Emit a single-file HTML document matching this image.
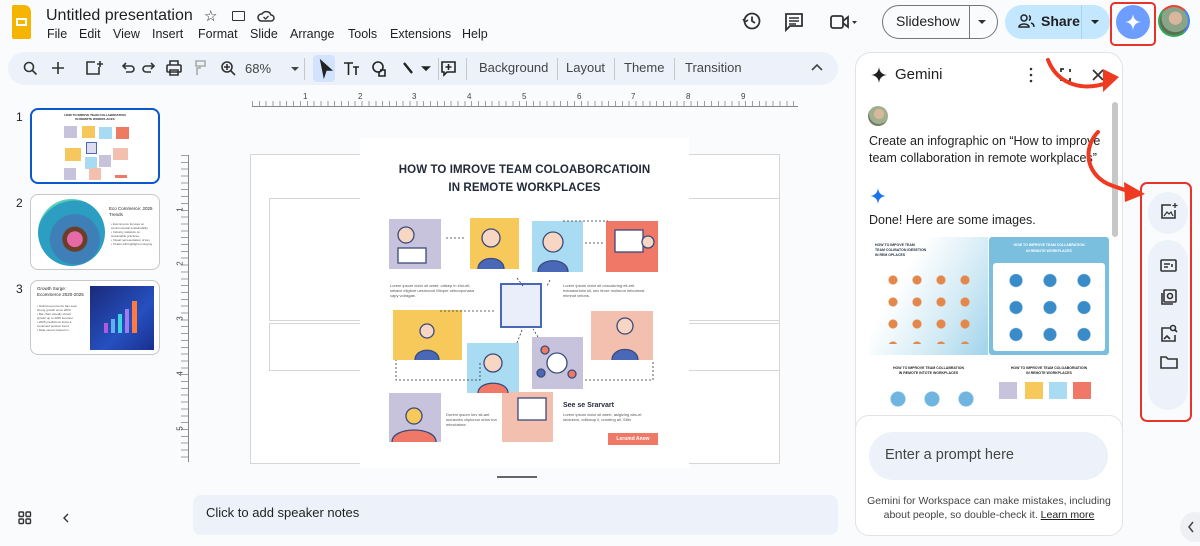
<!DOCTYPE html>
<html><head><meta charset="utf-8">
<style>
*{margin:0;padding:0;box-sizing:border-box}
body{width:1200px;height:546px;overflow:hidden;background:#f9fbfd;font-family:"Liberation Sans",Arial,sans-serif;color:#1f1f1f;position:relative}
.a{position:absolute}
.menu span{position:absolute;top:0}
.tb{font-size:13px;color:#444}
.tile{position:absolute}
.sm{font-size:4px;line-height:5px;color:#555}
.rn{position:absolute;top:92px;font-size:8px;color:#444}
</style></head><body>

<!-- logo -->
<div class="a" style="left:12px;top:5px;width:19px;height:34px;background:#f5b400;border-radius:2px 7px 2px 2px"></div>
<div class="a" style="left:16px;top:18px;width:11px;height:8px;border:2px solid #fff"></div>
<div class="a" style="left:46px;top:7px;font-size:16px;color:#1f1f1f">Untitled presentation</div>
<div class="a" style="left:204px;top:7px;font-size:15px">☆</div>
<div class="a" style="left:232px;top:11px;width:13px;height:10px;border:1.6px solid #333;border-radius:1px"></div>
<svg class="a" style="left:257px;top:9px" width="18" height="14"><path d="M4 12h10a3 3 0 0 0 0-6 5 5 0 0 0-9-1 3.5 3.5 0 0 0-1 7z" fill="none" stroke="#333" stroke-width="1.5"/><path d="M6.5 8l2 2 3-3" fill="none" stroke="#333" stroke-width="1.3"/></svg>
<div class="a menu" style="left:0;top:27px;font-size:12.5px;color:#1f1f1f;width:500px;height:16px"><span style="left:47px">File</span><span style="left:79px">Edit</span><span style="left:113px">View</span><span style="left:152px">Insert</span><span style="left:198px">Format</span><span style="left:250px">Slide</span><span style="left:290px">Arrange</span><span style="left:348px">Tools</span><span style="left:390px">Extensions</span><span style="left:462px">Help</span></div>

<!-- top right -->
<svg class="a" style="left:742px;top:11px" width="20" height="20"><circle cx="10" cy="10" r="7.5" fill="none" stroke="#333" stroke-width="1.8"/><path d="M10 5.5V10l3 2" fill="none" stroke="#333" stroke-width="1.8"/><path d="M1 8l2 3 3-2" fill="none" stroke="#333" stroke-width="1.6"/></svg>
<svg class="a" style="left:784px;top:12px" width="20" height="20"><path d="M2 2h16v12H6l-4 4z" fill="none" stroke="#333" stroke-width="1.8"/><path d="M5 6h10M5 9h10M5 12h7" stroke="#333" stroke-width="1.5"/></svg>
<svg class="a" style="left:829px;top:13px" width="30" height="18"><rect x="2" y="3" width="12" height="12" rx="2" fill="none" stroke="#333" stroke-width="1.8"/><path d="M14 8l5-4v10l-5-4" fill="none" stroke="#333" stroke-width="1.8"/><path d="M23 8h5l-2.5 3z" fill="#333"/></svg>
<div class="a" style="left:882px;top:5px;width:116px;height:34px;border:1px solid #747775;border-radius:17px"></div>
<div class="a" style="left:969px;top:5px;width:1px;height:34px;background:#747775"></div>
<div class="a" style="left:896px;top:13px;font-size:14px;color:#1f1f1f">Slideshow</div>
<svg class="a" style="left:977px;top:18px" width="10" height="8"><path d="M1 2h8l-4 4z" fill="#333"/></svg>
<div class="a" style="left:1005px;top:5px;width:105px;height:34px;background:#c2e7ff;border-radius:17px"></div>
<div class="a" style="left:1081px;top:5px;width:1px;height:34px;background:#a9d3ee"></div>
<svg class="a" style="left:1018px;top:14px" width="18" height="14"><circle cx="6" cy="4" r="3" fill="none" stroke="#222" stroke-width="1.5"/><path d="M1 13c0-4 10-4 10 0z" fill="none" stroke="#222" stroke-width="1.5"/><path d="M11 1.5a3 3 0 0 1 0 5M13 9c2 .5 3 2 3 4" fill="none" stroke="#222" stroke-width="1.5"/></svg>
<div class="a" style="left:1041px;top:13px;font-size:14px;font-weight:bold;color:#1f1f1f">Share</div>
<svg class="a" style="left:1090px;top:18px" width="10" height="8"><path d="M1 2h8l-4 4z" fill="#222"/></svg>
<div class="a" style="left:1116px;top:5px;width:34px;height:34px;border-radius:50%;background:#6d9eff"></div>
<svg class="a" style="left:1124px;top:13px" width="18" height="18"><path d="M9 1C9.6 6 12 8.4 17 9 12 9.6 9.6 12 9 17 8.4 12 6 9.6 1 9 6 8.4 8.4 6 9 1z" fill="#fff"/></svg>
<div class="a" style="left:1110px;top:2px;width:46px;height:44px;border:2.5px solid #e8332a;border-radius:5px"></div>
<div class="a" style="left:1158px;top:5px;width:32px;height:32px;border-radius:50%;border:2px solid #34a853;border-top-color:#ea4335;border-right-color:#4285f4;background:radial-gradient(circle at 55% 40%,#d9b79c 0 28%,#8aa48a 30% 60%,#5c6d53 62%)"></div>

<!-- toolbar -->
<div class="a" style="left:8px;top:52px;width:830px;height:33px;background:#edf2fa;border-radius:17px"></div>
<svg class="a" style="left:20px;top:58px" width="440" height="22" fill="none" stroke="#333" stroke-width="1.6">
<circle cx="9" cy="9" r="4.5"/><path d="M12.5 12.5l4 4"/>
<path d="M38 4v12M32 10h12"/>
<path d="M75 4h-8v12h12V9"/><path d="M80 3v6M77 6h6"/>
<path d="M104 8h7a3 3 0 0 1 0 6h-5"/><path d="M106 5l-3 3 3 3"/>
<path d="M133 8h-7a3 3 0 0 0 0 6h5"/><path d="M131 5l3 3-3 3"/>
<rect x="147" y="7" width="14" height="7" rx="1"/><path d="M150 7V3h8v4M150 12h8v5h-8z"/>
<path d="M176 3h9v5h-9zM180 8v2l-3 0v7" stroke="#aaa"/>
<circle cx="207" cy="9" r="5"/><path d="M211 13l4 4M207 6v6M204 9h6"/>
</svg>
<div class="a tb" style="left:245px;top:61px">68%</div>
<svg class="a" style="left:290px;top:66px" width="10" height="6"><path d="M1 1h8l-4 4z" fill="#444"/></svg>
<div class="a" style="left:304px;top:58px;width:1px;height:22px;background:#c7c7c7"></div>
<div class="a" style="left:313px;top:55px;width:22px;height:27px;background:#d3e3fd;border-radius:4px"></div>
<svg class="a" style="left:316px;top:58px" width="200" height="22" fill="none" stroke="#222" stroke-width="1.6">
<path d="M5 3l10 9-5 0-2 6z" fill="#222"/>
<path d="M28 5h9M32.5 5v12M37 9h6M40 9v8"/>
<circle cx="62" cy="9" r="5"/><path d="M64 12h5v6h-6v-4"/>
<path d="M88 5l8 10" stroke-width="2.4"/><path d="M107 9h6l-3 3z" fill="#222"/>
<path d="M126 4h13v10h-8l-3 3v-3h-2z"/><path d="M132.5 6v6M129.5 9h6"/>
</svg>
<div class="a" style="left:438px;top:58px;width:1px;height:22px;background:#c7c7c7"></div>
<div class="a" style="left:466px;top:58px;width:1px;height:22px;background:#c7c7c7"></div>
<div class="a tb" style="left:479px;top:60px">Background</div>
<div class="a" style="left:557px;top:58px;width:1px;height:22px;background:#c7c7c7"></div>
<div class="a tb" style="left:566px;top:60px">Layout</div>
<div class="a" style="left:614px;top:58px;width:1px;height:22px;background:#c7c7c7"></div>
<div class="a tb" style="left:624px;top:60px">Theme</div>
<div class="a" style="left:674px;top:58px;width:1px;height:22px;background:#c7c7c7"></div>
<div class="a tb" style="left:685px;top:60px">Transition</div>
<svg class="a" style="left:811px;top:64px" width="12" height="8"><path d="M1 6l5-5 5 5" fill="none" stroke="#444" stroke-width="1.6"/></svg>

<!-- thumbnails -->
<div class="a" style="left:16px;top:110px;font-size:12px">1</div>
<div class="a" style="left:16px;top:196px;font-size:12px">2</div>
<div class="a" style="left:16px;top:282px;font-size:12px">3</div>
<div class="a" style="left:30px;top:108px;width:130px;height:76px;border:2.5px solid #0b57d0;border-radius:8px;background:#fff;overflow:hidden">
 <div style="font-size:3px;font-weight:bold;text-align:center;margin-top:3px">HOW TO IMROVE TEAM COLLABORATION<br>IN REMOTE WORKPLACES</div>
 <div class="a" style="left:32px;top:16px;width:13px;height:12px;background:#c8c3dd"></div><div class="a" style="left:50px;top:16px;width:13px;height:12px;background:#f6c75c"></div><div class="a" style="left:67px;top:17px;width:13px;height:12px;background:#a7dbf2"></div><div class="a" style="left:84px;top:17px;width:13px;height:12px;background:#ef7a64"></div>
 <div class="a" style="left:33px;top:38px;width:16px;height:13px;background:#f6c75c"></div><div class="a" style="left:54px;top:32px;width:11px;height:12px;background:#dde;border:1px solid #4a68b8"></div><div class="a" style="left:81px;top:38px;width:15px;height:12px;background:#f3bfae"></div>
 <div class="a" style="left:53px;top:47px;width:12px;height:12px;background:#a7dbf2"></div><div class="a" style="left:67px;top:45px;width:12px;height:12px;background:#c8c3dd"></div>
 <div class="a" style="left:32px;top:58px;width:12px;height:12px;background:#c8c3dd"></div><div class="a" style="left:57px;top:58px;width:12px;height:12px;background:#f3bfae"></div><div class="a" style="left:83px;top:65px;width:12px;height:3px;background:#ef7a64"></div>
</div>
<div class="a" style="left:30px;top:194px;width:130px;height:76px;border:1px solid #c7c7c7;border-radius:8px;background:#fff;overflow:hidden">
 <div class="a" style="left:7px;top:4px;width:67px;height:67px;border-radius:50%;background:radial-gradient(circle at 55% 60%,#e66aa8 0 14%,#6b3e28 15% 22%,#3e7fb8 24% 45%,#2c9ec2 47% 70%,#5ad1b5 72%)"></div>
 <div class="a" style="left:78px;top:11px;font-size:4.5px;line-height:6px">Eco Commerce: 2025<br>Trends</div>
 <div class="a" style="left:80px;top:27px;font-size:3px;line-height:4px;color:#555">• Ecommerce focuses on<br>environmental sustainability<br>• Industry statistics on<br>sustainable practices<br>• Visual representation of key<br>• Charts will highlight emerging</div>
</div>
<div class="a" style="left:30px;top:280px;width:130px;height:75px;border:1px solid #c7c7c7;border-radius:8px;background:#fff;overflow:hidden">
 <div class="a" style="left:6px;top:5px;font-size:4.5px;line-height:6px">Growth Surge:<br>Ecommerce 2020-2025</div>
 <div class="a" style="left:6px;top:23px;font-size:3px;line-height:4px;color:#555">• Global ecommerce has seen<br>strong growth since 2020<br>• Bar chart visually shows<br>growth up to 2025 forecast<br>• 2025 predictions show a<br>continued positive trend<br>• Data used is based on</div>
 <div class="a" style="left:59px;top:5px;width:64px;height:64px;background:linear-gradient(135deg,#1b2a7a,#2550c0 60%,#1a2f8f)"></div>
 <div class="a" style="left:73px;top:42px;width:4px;height:10px;background:#b05adf"></div><div class="a" style="left:80px;top:38px;width:4px;height:14px;background:#5fb0f0"></div><div class="a" style="left:87px;top:33px;width:4px;height:19px;background:#41d4e0"></div><div class="a" style="left:94px;top:28px;width:4px;height:24px;background:#9e7cf0"></div><div class="a" style="left:101px;top:20px;width:5px;height:32px;background:#ff7a3c"></div>
</div>

<!-- rulers -->
<div class="a" style="left:252px;top:106px;width:546px;height:1px;background:#888"></div>
<div class="a" style="left:252px;top:101px;width:546px;height:5px;background:repeating-linear-gradient(90deg,#888 0 1px,transparent 1px 6.85px);opacity:.8"></div>
<div class="rn" style="left:303px">1</div><div class="rn" style="left:358px">2</div><div class="rn" style="left:412px">3</div><div class="rn" style="left:467px">4</div><div class="rn" style="left:522px">5</div><div class="rn" style="left:577px">6</div><div class="rn" style="left:631px">7</div><div class="rn" style="left:686px">8</div><div class="rn" style="left:741px">9</div>
<div class="a" style="left:181px;top:155px;width:7px;height:307px;background:repeating-linear-gradient(180deg,#888 0 1px,transparent 1px 6.85px);opacity:.8"></div>
<div class="a" style="left:188px;top:155px;width:1px;height:307px;background:#888"></div>
<div class="a" style="left:178px;top:205px;font-size:8px;color:#444;transform:rotate(-90deg)">1</div>
<div class="a" style="left:178px;top:259px;font-size:8px;color:#444;transform:rotate(-90deg)">2</div>
<div class="a" style="left:178px;top:314px;font-size:8px;color:#444;transform:rotate(-90deg)">3</div>
<div class="a" style="left:178px;top:369px;font-size:8px;color:#444;transform:rotate(-90deg)">4</div>
<div class="a" style="left:178px;top:424px;font-size:8px;color:#444;transform:rotate(-90deg)">5</div>

<!-- canvas -->
<div class="a" style="left:250px;top:154px;width:530px;height:310px;background:#fff;border:1px solid #d6d6d6"></div>
<div class="a" style="left:269px;top:198px;width:511px;height:123px;border:1px solid #d6d6d6"></div>
<div class="a" style="left:269px;top:323px;width:511px;height:48px;border:1px solid #d6d6d6"></div>
<div class="a" style="left:497px;top:476px;width:40px;height:2px;background:#666"></div>

<!-- infographic -->
<div class="a" style="left:360px;top:138px;width:329px;height:330px;background:#fff;overflow:hidden">
 <div style="position:absolute;top:23px;width:100%;text-align:center;font-size:11.5px;font-weight:bold;line-height:18px;color:#242a3a;letter-spacing:.1px">HOW TO IMROVE TEAM COLOABORCATIOIN<br>IN REMOTE WORKPLACES</div>
 <div class="tile" style="left:29px;top:81px;width:52px;height:50px;background:#c8c3dd"></div>
 <div class="tile" style="left:110px;top:80px;width:49px;height:51px;background:#f7c85a"></div>
 <div class="tile" style="left:172px;top:83px;width:51px;height:51px;background:#a9dcf3"></div>
 <div class="tile" style="left:246px;top:83px;width:52px;height:51px;background:#ef7966"></div>
 <div class="tile" style="left:140px;top:145px;width:42px;height:45px;background:#e9eefa;border:2px solid #4a68b8"></div>
 <div class="tile" style="left:33px;top:172px;width:69px;height:50px;background:#f7c85a"></div>
 <div class="tile" style="left:231px;top:173px;width:62px;height:49px;background:#f3bfae"></div>
 <div class="tile" style="left:107px;top:205px;width:52px;height:50px;background:#a9dcf3"></div>
 <div class="tile" style="left:172px;top:199px;width:51px;height:52px;background:#c8c3dd"></div>
 <div class="tile" style="left:29px;top:255px;width:52px;height:49px;background:#c8c3dd"></div>
 <div class="tile" style="left:142px;top:254px;width:51px;height:50px;background:#f3bfae"></div>
 <svg class="tile" style="left:0;top:0" width="329" height="330" fill="none" stroke="#3b4a7a" stroke-width="1.3">
  <circle cx="46" cy="97" r="8" fill="#f8d6c4"/><rect x="38" y="110" width="28" height="15" fill="#fff"/>
  <circle cx="131" cy="100" r="9" fill="#f8d6c4"/><path d="M118 131c0-14 26-14 26 0" fill="#4a68b8"/>
  <circle cx="193" cy="104" r="10" fill="#f8d6c4"/><path d="M178 134c0-15 30-15 30 0" fill="#4a68b8"/>
  <rect x="255" y="92" width="28" height="22" fill="#fff"/><circle cx="288" cy="104" r="6" fill="#f8d6c4"/>
  <circle cx="67" cy="193" r="7" fill="#f8d6c4"/><path d="M55 222c0-13 24-13 24 0" fill="#4a68b8"/>
  <circle cx="133" cy="225" r="9" fill="#f8d6c4"/><path d="M118 255c0-13 30-13 30 0" fill="#ef7966"/>
  <circle cx="197" cy="225" r="10" fill="#fff"/><circle cx="185" cy="212" r="4" fill="#ef7966"/><circle cx="212" cy="236" r="4" fill="#ef7966"/><circle cx="181" cy="235" r="4" fill="#4a68b8"/>
  <circle cx="265" cy="188" r="8" fill="#f8d6c4"/><path d="M252 222c0-14 26-14 26 0" fill="#4a68b8"/>
  <circle cx="54" cy="278" r="8" fill="#f7c85a"/><path d="M32 304c0-16 44-16 44 0" fill="#ef7966"/>
  <rect x="158" y="260" width="28" height="22" fill="#fff"/>
 </svg>
 <div class="tile" style="left:248px;top:295px;width:50px;height:12px;background:#ef7966;color:#fff;font-size:5px;text-align:center;line-height:12px;font-weight:bold">Lerumd Anow</div>
 <div class="tile sm" style="left:30px;top:145px;width:90px">Lorem ipsum dolor sit amet, odisep in elui-elt, setatur eligfont uesmoord Mlopre oetuorponasa capy volragae.</div>
 <div class="tile sm" style="left:203px;top:145px;width:92px">Lorem ipsum dolor sit onrualcring elt-eet ectoaeurlolm sll, sec tirore molluron infoumoal mimnot velons.</div>
 <div class="tile sm" style="left:86px;top:274px;width:52px">Dorem ipsum lorv sit-aet scruscten clipiunun ortos ma mimclatore-</div>
 <div class="tile" style="left:203px;top:264px;font-size:7px;font-weight:bold;color:#242a3a">See se Srarvart</div>
 <div class="tile sm" style="left:203px;top:274px;width:92px">Lorem ipsum dolor sit abert, asigizing alto-et sectolem, odilosup il, urooting all, Sltin</div>
 <svg class="tile" style="left:0;top:0" width="329" height="330" fill="none" stroke="#333" stroke-width=".8" stroke-dasharray="2 2">
  <path d="M86 100h20M225 105h18M80 173h55M120 225v17H36v-20M103 242h4M225 242h68v-20M157 140l6 8M190 142l-3 6M157 205l5-13M178 199l-5-8M203 83h45"/>
 </svg>
</div>

<!-- notes -->
<div class="a" style="left:193px;top:495px;width:645px;height:40px;background:#edf2fa;border-radius:8px"></div>
<div class="a" style="left:206px;top:505px;font-size:13px;color:#1f1f1f">Click to add speaker notes</div>
<svg class="a" style="left:18px;top:511px" width="60" height="14" fill="none" stroke="#333" stroke-width="1.4"><rect x="1" y="1" width="4.5" height="4.5" rx="1"/><rect x="8" y="1" width="4.5" height="4.5" rx="1"/><rect x="1" y="8" width="4.5" height="4.5" rx="1"/><rect x="8" y="8" width="4.5" height="4.5" rx="1"/><path d="M50 3l-4 4 4 4"/></svg>

<!-- gemini panel -->
<div class="a" style="left:855px;top:52px;width:268px;height:484px;background:#fff;border:1px solid #e3e3e3;border-radius:16px"></div>
<svg class="a" style="left:870px;top:66px" width="18" height="18"><path d="M9 1C9.6 6 12 8.4 17 9 12 9.6 9.6 12 9 17 8.4 12 6 9.6 1 9 6 8.4 8.4 6 9 1z" fill="#1f1f1f"/></svg>
<div class="a" style="left:895px;top:66px;font-size:15px;color:#1f1f1f">Gemini</div>
<svg class="a" style="left:1024px;top:66px" width="90" height="18" stroke="#333" stroke-width="1.8" fill="none"><circle cx="7" cy="3" r="1.3" fill="#333" stroke="none"/><circle cx="7" cy="9" r="1.3" fill="#333" stroke="none"/><circle cx="7" cy="15" r="1.3" fill="#333" stroke="none"/><path d="M37 6V3h3M46 12v3h-3M37 12v3M46 6V3"/><path d="M69 4l10 10M79 4L69 14"/></svg>
<div class="a" style="left:1112px;top:102px;width:6px;height:135px;background:#c7c7c7;border-radius:3px"></div>
<div class="a" style="left:868px;top:106px;width:20px;height:20px;border-radius:50%;background:radial-gradient(circle at 55% 40%,#d9b79c 0 30%,#a0b08c 32% 60%,#6f7e66 62%)"></div>
<div class="a" style="left:869px;top:133px;font-size:12.5px;line-height:17px;color:#1f1f1f">Create an infographic on “How to improve<br>team collaboration in remote workplaces”</div>
<svg class="a" style="left:869px;top:187px" width="18" height="18"><path d="M9 1C9.6 6 12 8.4 17 9 12 9.6 9.6 12 9 17 8.4 12 6 9.6 1 9 6 8.4 8.4 6 9 1z" fill="#1a73e8"/></svg>
<div class="a" style="left:869px;top:213px;font-size:12.5px;color:#1f1f1f">Done! Here are some images.</div>
<div class="a" style="left:869px;top:237px;width:119px;height:118px;background:linear-gradient(120deg,#fff 30%,#cfe9f4 70%,#9fd3ea);overflow:hidden">
 <div style="font-size:3.5px;font-weight:bold;margin:6px 0 0 6px;line-height:5px;color:#234">HOW TO IMPOVE TEAM<br>TEAM COLIBATON IDESETION<br>IN REM OPLACES</div>
 <div class="a" style="left:12px;top:32px;width:95px;height:75px;background:radial-gradient(circle,#e4874a 0 4px,transparent 5px) 0 0/24px 22px"></div>
</div>
<div class="a" style="left:989px;top:237px;width:120px;height:118px;background:#7bbfdf;border-radius:3px;overflow:hidden">
 <div style="font-size:3.5px;font-weight:bold;color:#fff;text-align:center;margin-top:5px;line-height:6px">HOW TO IMPROVE TEAM COLLABRATION<br>IN REMOTE WORKPLACES</div>
 <div class="a" style="left:4px;top:26px;width:112px;height:88px;background:#fff;border-radius:3px"></div>
 <div class="a" style="left:10px;top:30px;width:100px;height:80px;background:radial-gradient(circle,#3a8cc8 0 6px,transparent 7px) 0 0/34px 27px"></div>
</div>
<div class="a" style="left:869px;top:362px;width:119px;height:52px;overflow:hidden">
 <div style="font-size:3.5px;font-weight:bold;text-align:center;margin-top:4px;line-height:5px">HOW TO IMPROVE TEAM COLLABRATION<br>IN REMOTE INTOTE WORKPLACES</div>
 <div class="a" style="left:12px;top:22px;width:100px;height:30px;background:radial-gradient(circle,#6fb5e0 0 7px,transparent 8px) 0 0/34px 30px"></div>
</div>
<div class="a" style="left:989px;top:362px;width:120px;height:52px;overflow:hidden">
 <div style="font-size:3.5px;font-weight:bold;text-align:center;margin-top:4px;line-height:5px">HOW TO IMPROVE TEAM COLOABORIATIOIN<br>IN REMOTE WORKPLACES</div>
 <div class="a" style="left:10px;top:20px;width:18px;height:17px;background:#c8c3dd"></div><div class="a" style="left:36px;top:20px;width:18px;height:17px;background:#f7c85a"></div><div class="a" style="left:60px;top:20px;width:18px;height:17px;background:#a9dcf3"></div><div class="a" style="left:84px;top:20px;width:18px;height:17px;background:#ef7966"></div>
</div>
<div class="a" style="left:855px;top:415px;width:268px;height:121px;background:#fff;border:1px solid #e3e3e3;border-radius:14px"></div>
<div class="a" style="left:869px;top:432px;width:239px;height:48px;background:#edf2fa;border-radius:24px"></div>
<div class="a" style="left:885px;top:447px;font-size:14.5px;color:#444">Enter a prompt here</div>
<div class="a" style="left:864px;top:494px;width:250px;text-align:center;font-size:10.5px;line-height:14px;color:#444">Gemini for Workspace can make mistakes, including about people, so double-check it. <u style="color:#1f1f1f">Learn more</u></div>

<!-- side panel -->
<div class="a" style="left:1148px;top:192px;width:40px;height:42px;background:#edf2fa;border-radius:20px"></div>
<div class="a" style="left:1148px;top:240px;width:40px;height:170px;background:#edf2fa;border-radius:20px"></div>
<svg class="a" style="left:1158px;top:202px" width="22" height="200" fill="none" stroke="#333" stroke-width="1.6">
<path d="M13 3H4v13h13V8"/><path d="M6 14l3-4 2 2 2-2 2 4" stroke-width="1.2"/><path d="M17 1v5M14.5 3.5h5" stroke-width="1.3"/>
<rect x="3" y="58" width="15" height="11" rx="1"/><path d="M6 62h6M6 65h4M14 62v3"/>
<rect x="6" y="88" width="12" height="12" rx="1"/><path d="M4 91v11h11"/><circle cx="12" cy="94" r="2.5"/>
<path d="M12 126H4v13h13v-6"/><circle cx="15" cy="126" r="2.5"/><path d="M17 128l2 2M6 137l3-3 3 3"/>
<path d="M3 166v-11h5l2 2h9v9z"/>
</svg>
<div class="a" style="left:1140px;top:182px;width:52px;height:240px;border:2.5px solid #e8332a;border-radius:7px"></div>
<div class="a" style="left:1180px;top:512px;width:30px;height:30px;border-radius:50%;background:#eef0f3"></div>
<svg class="a" style="left:1186px;top:520px" width="10" height="14"><path d="M7 2l-4 5 4 5" fill="none" stroke="#444" stroke-width="1.5"/></svg>

<!-- arrows -->
<svg class="a" style="left:0;top:0" width="1200" height="546">
<path d="M1048 60c10 25 35 32 62 22" fill="none" stroke="#ef3a22" stroke-width="4" stroke-linecap="round"/>
<path d="M1103 69l16 8-16 15z" fill="#ef3a22"/>
<path d="M1098 132c-14 14-14 40 10 52 10 4 20 7 27 9" fill="none" stroke="#ef3a22" stroke-width="4" stroke-linecap="round"/>
<path d="M1124 182l21 12-20 8z" fill="#ef3a22"/>
</svg>
</body></html>
